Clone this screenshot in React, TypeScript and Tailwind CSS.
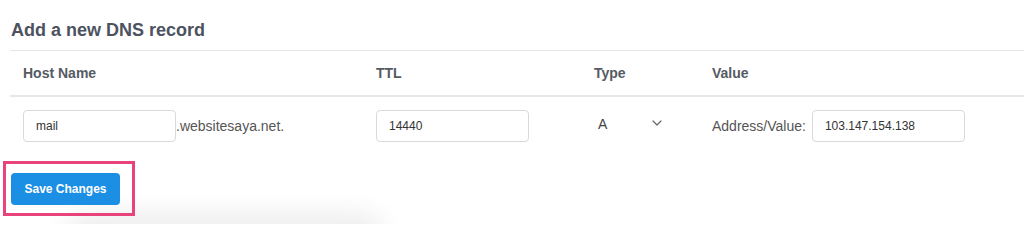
export default function App() {
  return (
    <div className="relative w-[1024px] h-[224px] overflow-hidden bg-white font-['Liberation_Sans',Arial,sans-serif]">
      {/* soft shadow under the card */}
      <div className="absolute left-[80px] top-[226px] w-[290px] h-[20px] rounded-full bg-[#ddd] shadow-[0_0_26px_14px_rgba(0,0,0,0.07)]" />

      <h2 className="relative pl-[11px] pt-[19px] text-[18px] leading-[22px] font-bold text-[#4d5260]">
        Add a new DNS record
      </h2>

      <div className="relative ml-[10px] mt-[9px] border-t border-[#e6e6e6]">
        <div className="grid grid-cols-[353px_218px_118px_1fr] pl-[13px] h-[46px] items-center border-b-2 border-[#e6e6e6] text-[14px] font-bold text-[#555a63]">
          <div>Host Name</div>
          <div>TTL</div>
          <div>Type</div>
          <div>Value</div>
        </div>

        <div className="grid grid-cols-[353px_218px_118px_1fr] pl-[13px] pt-[13px] text-[12px] text-[#333]">
          <div className="flex items-center">
            <input
              defaultValue="mail"
              className="w-[153px] h-[32px] px-[12px] border border-[#d9d9d9] rounded-[4px] outline-none"
            />
            <span className="text-[14px] text-[#555]">.websitesaya.net.</span>
          </div>
          <div>
            <input
              defaultValue="14440"
              className="w-[153px] h-[32px] px-[12px] border border-[#d9d9d9] rounded-[4px] outline-none"
            />
          </div>
          <div className="flex items-start pt-[4px] pl-[4px] text-[14px] text-[#444]">
            <span>A</span>
            <svg viewBox="0 0 10 6" className="ml-[45px] mt-[6px] w-[10px] h-[6px]" fill="none">
              <path d="M1 1l4 4 4-4" stroke="#666" strokeWidth="1.2" strokeLinecap="round" strokeLinejoin="round" />
            </svg>
          </div>
          <div className="flex items-center">
            <span className="text-[14px] text-[#555]">Address/Value:</span>
            <input
              defaultValue="103.147.154.138"
              className="ml-[6px] w-[153px] h-[32px] px-[12px] border border-[#d9d9d9] rounded-[4px] outline-none"
            />
          </div>
        </div>
      </div>

      <div className="relative ml-[3px] mt-[19px] w-[132px] h-[55px] border-[3px] border-[#e8447a] pl-[5px] pt-[9px]">
        <button className="w-[109px] h-[32px] rounded-[4px] bg-[#1a8fe3] text-white text-[12px] font-bold">
          Save Changes
        </button>
      </div>
    </div>
  );
}
